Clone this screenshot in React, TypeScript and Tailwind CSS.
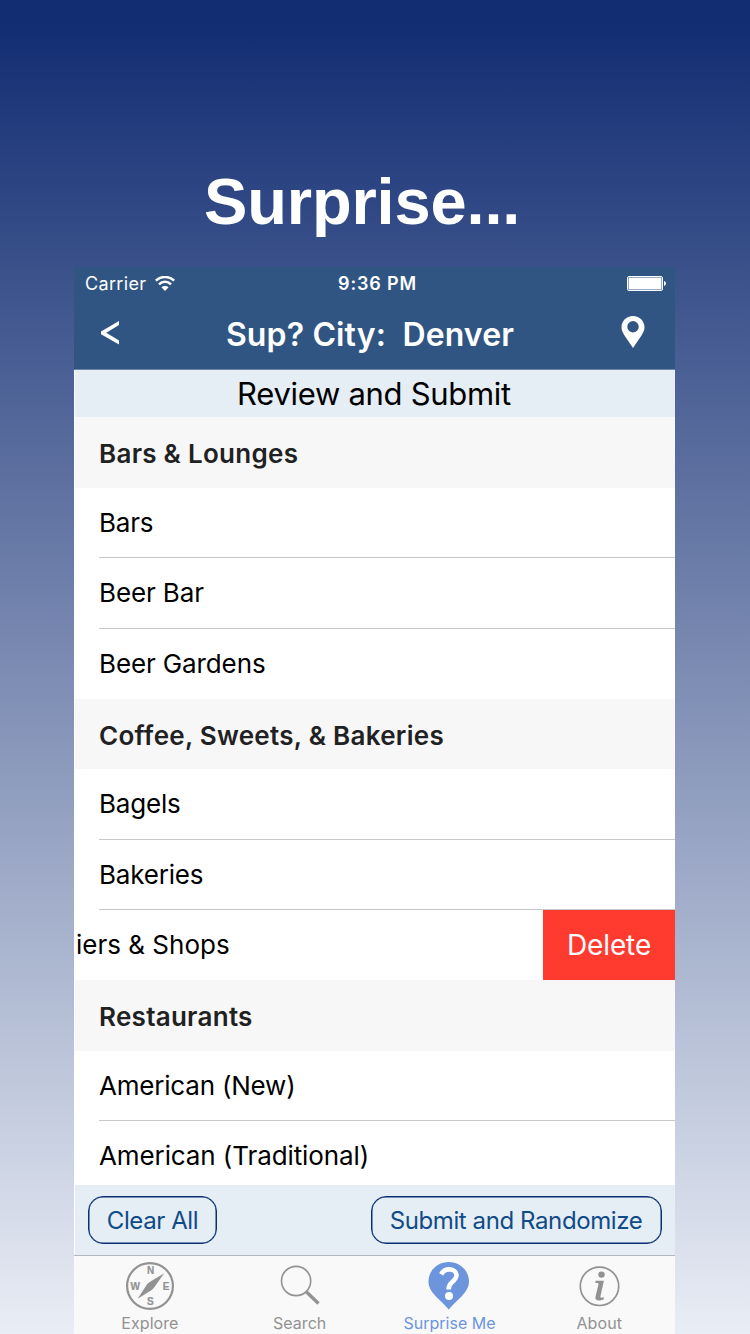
import React from "react";

const sans = "font-['Inter',sans-serif]";

function Section({ label, height }: { label: string; height: string }) {
  return (
    <div className={`flex shrink-0 items-center bg-[#f7f7f7] pl-6 pt-[3px] text-[26px] font-semibold leading-8 tracking-[0.28px] text-[#1f2123] ${height}`}>
      <span className="whitespace-pre">{label}</span>
    </div>
  );
}

function Row({ label, height, tracking = "tracking-[-0.2px]", line = true }: { label: string; height: string; tracking?: string; line?: boolean }) {
  return (
    <div className={`shrink-0 bg-white pl-6 ${height}`}>
      <div className={`flex h-full items-center border-b text-[26px] leading-8 text-black ${line ? "border-[#c8c7cc]" : "border-transparent"}`}>
        <span className={`whitespace-pre ${tracking}`}>{label}</span>
      </div>
    </div>
  );
}

function WifiIcon() {
  return (
    <svg className="h-[16px] w-[20px]" viewBox="0 0 20 16" fill="none">
      <path d="M.8 4.700a13.300 13.300 0 0 1 18.400 0" stroke="#fff" strokeWidth="2.500" />
      <path d="M4 8.300a8.600 8.600 0 0 1 12 0" stroke="#fff" strokeWidth="2.500" />
      <path d="M6.400 11.200a5 5 0 0 1 7.200 0L10 14.900z" fill="#fff" />
    </svg>
  );
}

function BatteryIcon() {
  return (
    <svg className="h-[16px] w-[39px]" viewBox="0 0 39 16" fill="none">
      <rect x=".5" y=".5" width="35" height="14" rx="1.5" stroke="#fff" />
      <rect x="1.500" y="1.500" width="33" height="12" rx=".5" fill="#fff" />
      <path d="M37 5c1.400.4 2 1.300 2 2.500s-.6 2.100-2 2.500z" fill="#fff" />
    </svg>
  );
}

function CompassIcon() {
  return (
    <svg className="h-12 w-12" viewBox="0 0 48 48" fill="none">
      <circle cx="24" cy="24" r="22.900" stroke="#929292" strokeWidth="2.200" />
      <path d="M38.200 11.200 28.300 25.200c-1.300 1.800-3 3.200-5 4.300L11.700 36.800 19.600 24.500c1.200-2 2.600-3.500 4.500-4.700z" fill="#929292" />
      <g fill="#929292" stroke="#929292" strokeWidth=".2" fontFamily="Liberation Sans, sans-serif" fontWeight="700" fontSize="10" textAnchor="middle">
        <text x="24.500" y="12">N</text>
        <text x="9.300" y="27.800">W</text>
        <text x="40" y="27.800">E</text>
        <text x="24.300" y="43">S</text>
      </g>
    </svg>
  );
}

function SearchIcon() {
  return (
    <svg className="h-12 w-12" viewBox="0 0 48 48" fill="none" stroke="#929292">
      <circle cx="20.100" cy="19" r="14.600" strokeWidth="1.600" />
      <path d="m30.500 30 12 11.500" strokeWidth="3.300" />
    </svg>
  );
}

function SurpriseIcon() {
  return (
    <svg className="h-12 w-12" viewBox="0 0 48 48" fill="none">
      <path d="M23.700 47.500C18.500 41 12 36.500 7.300 30.300 4.600 26.500 3.500 23 3.500 19.500 3.500 8.500 12.500 0 23.700 0S44 8.500 44 19.500c0 3.500-1.200 7-4 10.800C35.500 36.500 28.900 41 23.700 47.500z" fill="#6c95de" />
      <path d="M16.200 12.400c2-4 5-5.200 8.300-5 4.200.2 7 2.500 7 5.900 0 3.100-2 4.800-4.300 6.700-2.500 2-3.600 3.400-3.600 7.400" stroke="#fff" strokeWidth="4.600" />
      <circle cx="24" cy="34" r="4" fill="#fff" />
    </svg>
  );
}

function InfoIcon() {
  return (
    <svg className="h-12 w-12" viewBox="0 0 48 48" fill="none">
      <g transform="translate(.5 0)">
        <circle cx="24" cy="24.300" r="19.200" stroke="#929292" strokeWidth="1.700" />
        <circle cx="26" cy="12.600" r="3.200" fill="#929292" />
        <path d="M20.200 18.700h8.200L25 34c-.4 1.900.7 2.200 3.500 1.300l-.4 2.200c-3.800 1.500-9.100 1.500-8.100-2.800l2.900-12.200c.3-1.400-.6-1.600-3.200-1.400z" fill="#929292" />
      </g>
    </svg>
  );
}

function Tab({ label, icon, tracking, active = false }: { label: string; icon: React.ReactNode; tracking: string; active?: boolean }) {
  return (
    <div className={`flex w-[149.8px] shrink-0 flex-col items-center pt-[6px] text-[16px] leading-5 ${active ? "text-[#6c95de]" : "text-[#929292]"}`}>
      {icon}
      <span className={`mt-[3px] whitespace-nowrap ${tracking}`}>{label}</span>
    </div>
  );
}

export default function App() {
  return (
    <main className={`flex h-[1334px] w-[750px] flex-col overflow-hidden bg-[linear-gradient(to_bottom,#122d72_0px,#122d72_25px,#e9edf5_1334px)] ${sans}`}>
      <h1 className="h-[267px] shrink-0 pl-[204px] pt-[164px] font-['Liberation_Sans',sans-serif] text-[65px] font-bold leading-[76px] tracking-[-0.15px] text-white">
        Surprise...
      </h1>
      <div className="ml-[74px] flex h-[1067px] w-[601px] shrink-0 flex-col overflow-hidden bg-white">
        <header className="h-[103px] shrink-0 border-b border-[#6f87a5] bg-[#305583] text-white">
          <div className="grid h-[33px] grid-cols-3 items-center pl-[11px] pr-[9px] text-[18px] leading-6">
            <div className="flex items-center gap-[9px]">
              <span className="tracking-[0.35px]">Carrier</span>
              <WifiIcon />
            </div>
            <span className="pl-[4px] text-center font-semibold tracking-[0.85px]">9:36 PM</span>
            <div className="flex justify-end"><BatteryIcon /></div>
          </div>
          <div className="flex h-[69px] items-center justify-between pl-[27px] pr-[30px]">
            <svg className="mb-1 h-[24px] w-[18px]" viewBox="0 0 18 24" fill="none">
              <path d="M18 0v4L5.300 11.800 18 19.500v4L0 13.200v-2.800z" fill="#fff" />
            </svg>
            <span className="whitespace-pre text-[32px] font-semibold leading-10 tracking-[0.13px]">Sup? City:  Denver</span>
            <svg className="mb-[5px] h-[32px] w-[24px]" viewBox="0 0 24 32">
              <path fillRule="evenodd" fill="#fff" d="M12 0C5.400 0 .5 5 .5 11.300c0 3 1.200 5.200 3 8.200L12 32l8.500-12.500c1.800-3 3-5.200 3-8.200C23.500 5 18.600 0 12 0zm0 5a5.700 5.700 0 1 1 0 11.400A5.700 5.700 0 0 1 12 5z" />
            </svg>
          </div>
        </header>
        <div className="ml-px flex h-[47px] shrink-0 items-center justify-center bg-[#e5edf5] pr-[2px] text-[31px] leading-10 tracking-[-0.3px] text-black">
          Review and Submit
        </div>
        <div className="ml-px flex h-[768px] shrink-0 flex-col overflow-hidden">
          <Section label="Bars & Lounges" height="h-[71px]" />
          <Row label="Bars" height="h-[70px]" />
          <Row label="Beer Bar" height="h-[71px]" tracking="tracking-[-0.12px]" />
          <Row label="Beer Gardens" height="h-[70px]" tracking="tracking-[-0.12px]" line={false} />
          <Section label="Coffee, Sweets, & Bakeries" height="h-[70px]" />
          <Row label="Bagels" height="h-[71px]" />
          <Row label="Bakeries" height="h-[70px]" />
          <div className="flex h-[70px] shrink-0 justify-between bg-white text-[26px] leading-8">
            <div className="flex items-center pl-[1px] tracking-[0px] text-black">iers &amp; Shops</div>
            <button className="flex w-[132px] items-center justify-center bg-[#ff3b30] text-[28px] tracking-[-0.1px] text-white">Delete</button>
          </div>
          <Section label="Restaurants" height="h-[71px]" />
          <Row label="American (New)" height="h-[70px]" />
          <Row label="American (Traditional)" height="h-[71px]" tracking="tracking-[-0.1px]" />
        </div>
        <div className="ml-px flex h-[70px] shrink-0 items-center justify-between bg-[#e5edf5] pl-[13px] pr-[13px] text-[24px] leading-8 text-[#104b87]">
          <button className="h-[48px] w-[129px] rounded-[15px] border border-[#0b2f70] pt-[2px] tracking-[-0.4px] shadow-[inset_0_0_0_0.5px_#0b2f70]">Clear All</button>
          <button className="h-[48px] w-[291px] rounded-[15px] border border-[#0b2f70] pr-[1px] pt-[2px] tracking-[-0.4px] shadow-[inset_0_0_0_0.5px_#0b2f70]">Submit and Randomize</button>
        </div>
        <nav className="flex h-[79px] shrink-0 border-t border-[#b2b7c2] bg-[#f9f9f9] pl-[1px]">
          <Tab label="Explore" icon={<CompassIcon />} tracking="tracking-[0.08px]" />
          <Tab label="Search" icon={<SearchIcon />} tracking="tracking-[0.05px]" />
          <Tab label="Surprise Me" icon={<SurpriseIcon />} tracking="tracking-[0px]" active />
          <Tab label="About" icon={<InfoIcon />} tracking="tracking-[0.1px]" />
        </nav>
      </div>
    </main>
  );
}
